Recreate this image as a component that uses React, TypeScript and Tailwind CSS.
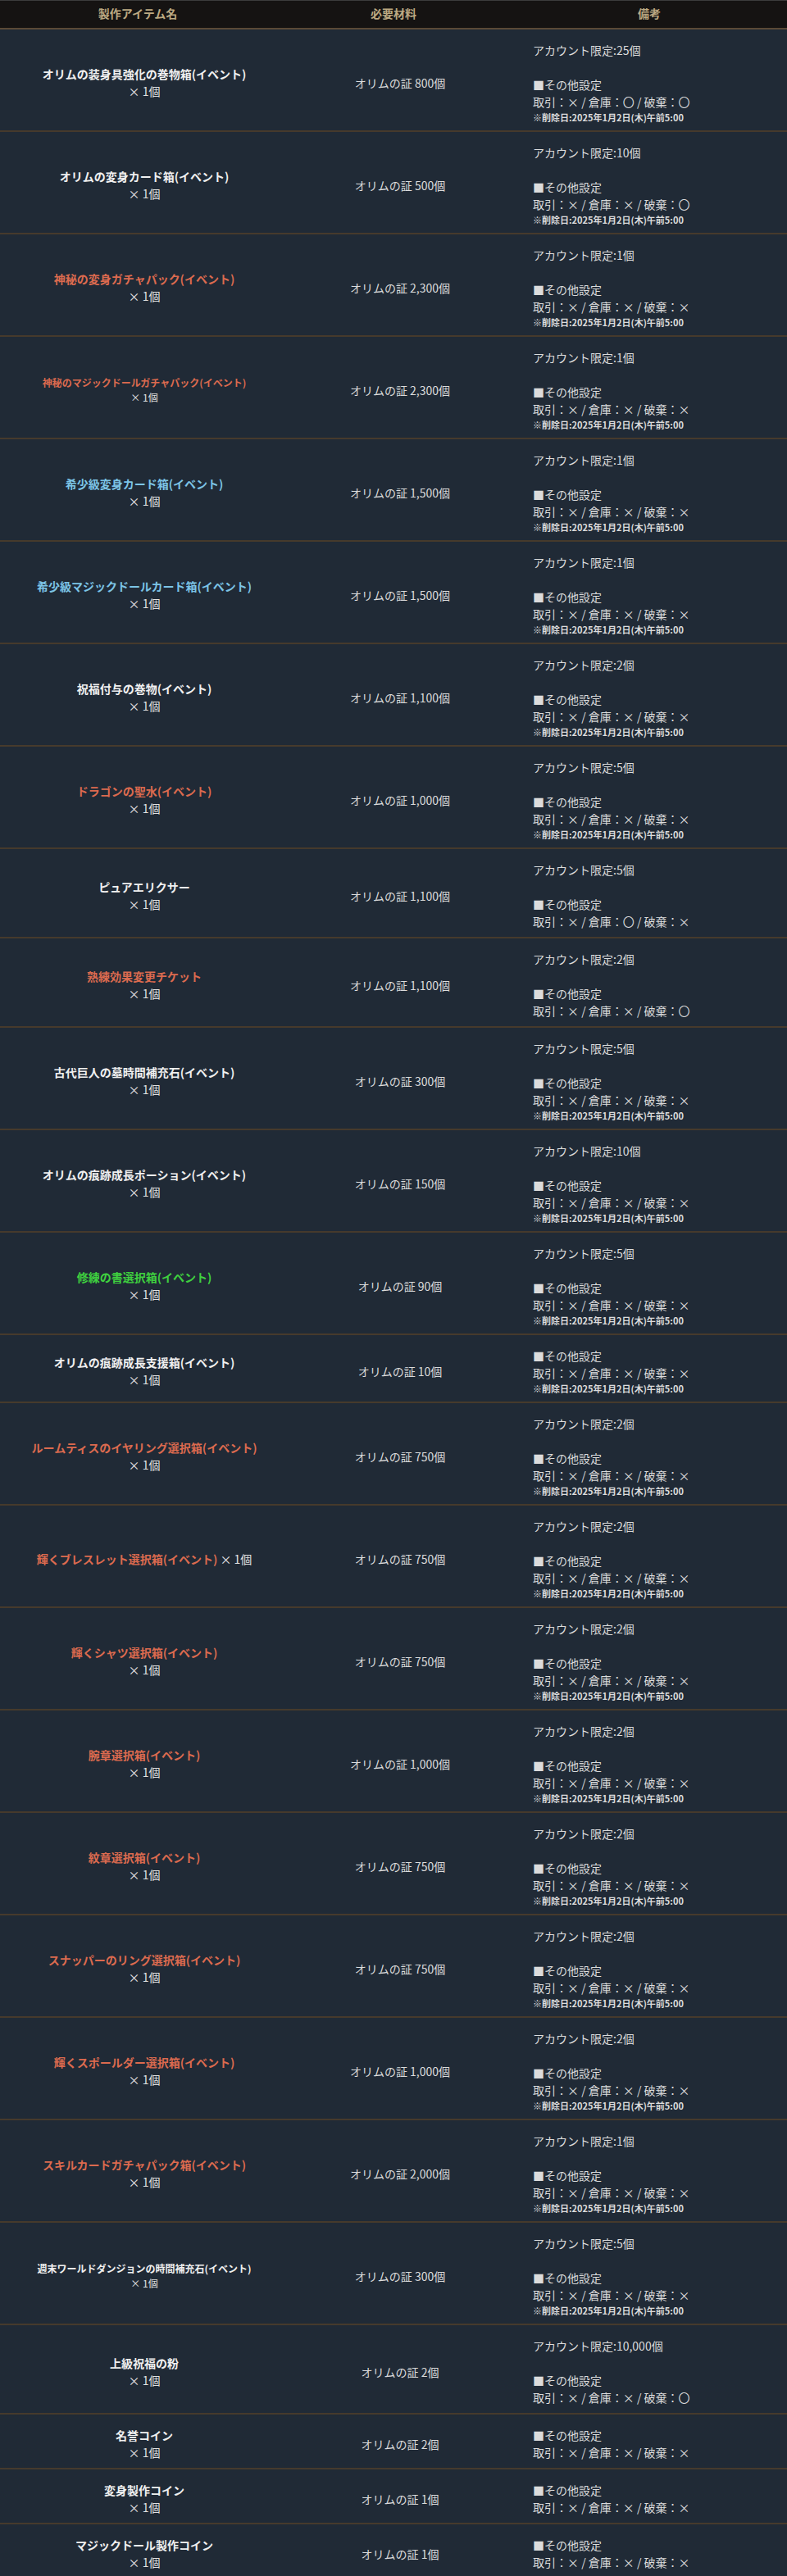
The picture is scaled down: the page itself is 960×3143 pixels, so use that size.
import React from "react";

type Tone = "white" | "red" | "blue" | "green";

interface Row {
  name: string;
  tone: Tone;
  small?: boolean;
  inline?: boolean;
  cost: string;
  limit?: string;
  trade: string;
  expire?: boolean;
}

const toneClass: Record<Tone, string> = {
  white: "text-[#f0f0f0]",
  red: "text-[#dc6a4f]",
  blue: "text-[#7cc4e6]",
  green: "text-[#3fd13f]",
};

const XXX = "取引：× / 倉庫：× / 破棄：×";
const XXO = "取引：× / 倉庫：× / 破棄：〇";

const rows: Row[] = [
  { name: "オリムの装身具強化の巻物箱(イベント)", tone: "white", cost: "800", limit: "25", trade: "取引：× / 倉庫：〇 / 破棄：〇", expire: true },
  { name: "オリムの変身カード箱(イベント)", tone: "white", cost: "500", limit: "10", trade: XXO, expire: true },
  { name: "神秘の変身ガチャパック(イベント)", tone: "red", cost: "2,300", limit: "1", trade: XXX, expire: true },
  { name: "神秘のマジックドールガチャパック(イベント)", tone: "red", small: true, cost: "2,300", limit: "1", trade: XXX, expire: true },
  { name: "希少級変身カード箱(イベント)", tone: "blue", cost: "1,500", limit: "1", trade: XXX, expire: true },
  { name: "希少級マジックドールカード箱(イベント)", tone: "blue", cost: "1,500", limit: "1", trade: XXX, expire: true },
  { name: "祝福付与の巻物(イベント)", tone: "white", cost: "1,100", limit: "2", trade: XXX, expire: true },
  { name: "ドラゴンの聖水(イベント)", tone: "red", cost: "1,000", limit: "5", trade: XXX, expire: true },
  { name: "ピュアエリクサー", tone: "white", cost: "1,100", limit: "5", trade: "取引：× / 倉庫：〇 / 破棄：×" },
  { name: "熟練効果変更チケット", tone: "red", cost: "1,100", limit: "2", trade: XXO },
  { name: "古代巨人の墓時間補充石(イベント)", tone: "white", cost: "300", limit: "5", trade: XXX, expire: true },
  { name: "オリムの痕跡成長ポーション(イベント)", tone: "white", cost: "150", limit: "10", trade: XXX, expire: true },
  { name: "修練の書選択箱(イベント)", tone: "green", cost: "90", limit: "5", trade: XXX, expire: true },
  { name: "オリムの痕跡成長支援箱(イベント)", tone: "white", cost: "10", trade: XXX, expire: true },
  { name: "ルームティスのイヤリング選択箱(イベント)", tone: "red", cost: "750", limit: "2", trade: XXX, expire: true },
  { name: "輝くブレスレット選択箱(イベント)", tone: "red", inline: true, cost: "750", limit: "2", trade: XXX, expire: true },
  { name: "輝くシャツ選択箱(イベント)", tone: "red", cost: "750", limit: "2", trade: XXX, expire: true },
  { name: "腕章選択箱(イベント)", tone: "red", cost: "1,000", limit: "2", trade: XXX, expire: true },
  { name: "紋章選択箱(イベント)", tone: "red", cost: "750", limit: "2", trade: XXX, expire: true },
  { name: "スナッパーのリング選択箱(イベント)", tone: "red", cost: "750", limit: "2", trade: XXX, expire: true },
  { name: "輝くスポールダー選択箱(イベント)", tone: "red", cost: "1,000", limit: "2", trade: XXX, expire: true },
  { name: "スキルカードガチャパック箱(イベント)", tone: "red", cost: "2,000", limit: "1", trade: XXX, expire: true },
  { name: "週末ワールドダンジョンの時間補充石(イベント)", tone: "white", small: true, cost: "300", limit: "5", trade: XXX, expire: true },
  { name: "上級祝福の粉", tone: "white", cost: "2", limit: "10,000", trade: XXO },
  { name: "名誉コイン", tone: "white", cost: "2", trade: XXX },
  { name: "変身製作コイン", tone: "white", cost: "1", trade: XXX },
  { name: "マジックドール製作コイン", tone: "white", cost: "1", trade: XXX },
];

const cell = "flex items-center pl-[26px] pr-[10px] pt-[15px] pb-[8px]";

const NameCell: React.FC<{ row: Row }> = ({ row }) => {
  if (row.inline) {
    return (
      <div className={`${cell} justify-center text-center text-[14px] leading-[21px] font-bold`}>
        <span className={toneClass[row.tone]}>{row.name}</span>
        <span className="text-[#e2e2e2] font-normal">&nbsp;× 1個</span>
      </div>
    );
  }
  const size = row.small ? "text-[12px] leading-[18px]" : "text-[14px] leading-[21px]";
  return (
    <div className={`${cell} flex-col justify-center text-center ${size}`}>
      <div className={`font-bold ${toneClass[row.tone]}`}>{row.name}</div>
      <div className="text-[#e2e2e2]">× 1個</div>
    </div>
  );
};

export default function App() {
  return (
    <div
      className="w-[960px] bg-[#202a36] text-[#dcdcdc]"
      style={{ fontFamily: '"Noto Sans CJK JP", "Noto Sans", sans-serif' }}
    >
      <div className="grid grid-cols-[336px_288px_336px] h-[36px] bg-[#151312] border-t border-[#3c3c3c] border-b-2 border-b-[#5a4936] text-[14px] font-bold text-[#bca982] pt-[5px]">
        <div className="text-center">製作アイテム名</div>
        <div className="text-center">必要材料</div>
        <div className="text-center">備考</div>
      </div>
      {rows.map((r) => (
        <div
          key={r.name}
          className="grid grid-cols-[336px_288px_336px] border-b-2 border-[#463a2c]"
        >
          <NameCell row={r} />
          <div className={`${cell} justify-center text-[14px] leading-[21px]`}>
            オリムの証 {r.cost}個
          </div>
          <div className="pl-[26px] pr-[10px] pt-[15px] pb-[8px] text-[14px] leading-[21px]">
            {r.limit && (
              <>
                <div>アカウント限定:{r.limit}個</div>
                <div>&nbsp;</div>
              </>
            )}
            <div>■その他設定</div>
            <div>{r.trade}</div>
            {r.expire && (
              <div className="text-[11px] leading-[16px] font-bold">
                ※削除日:2025年1月2日(木)午前5:00
              </div>
            )}
          </div>
        </div>
      ))}
    </div>
  );
}
